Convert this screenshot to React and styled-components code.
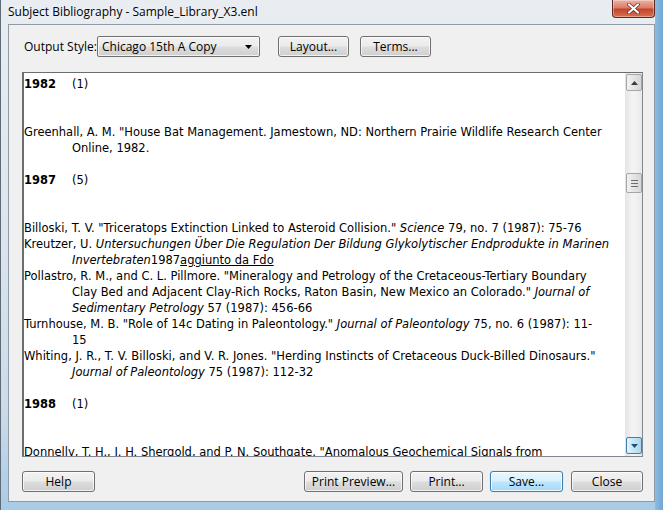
import React from "react";
import styled, { createGlobalStyle, css } from "styled-components";

const GlobalStyle = createGlobalStyle`
  html, body {
    margin: 0;
    padding: 0;
    overflow: hidden;
  }
  body {
    font-family: "Open Sans", "Noto Sans", sans-serif;
  }
`;

const Window = styled.div`
  width: 663px;
  height: 510px;
  box-sizing: border-box;
  display: flex;
  flex-direction: column;
  border-left: 1px solid #5d6b78;
  background:
    linear-gradient(to right, transparent 654px, #8cbde2 654px, #6fa6d3 662px),
    linear-gradient(to bottom, #e9edf1 0%, #dfe6ed 40%, #cddbe8 80%, #a9cbe6 100%);
`;

const TitleBar = styled.div`
  height: 24px;
  flex: none;
  display: flex;
  align-items: flex-start;
  padding-left: 7px;
`;

const Title = styled.div`
  font-size: 12px;
  line-height: 24px;
  color: #000;
  text-shadow: 0 0 6px rgba(255, 255, 255, 0.9);
`;

const CloseButton = styled.div`
  margin-left: auto;
  margin-right: 8px;
  width: 43px;
  height: 18px;
  box-sizing: border-box;
  border: 1px solid #5a2a22;
  border-top: none;
  border-radius: 0 0 4px 4px;
  background: linear-gradient(to bottom, #eeb2a4 0%, #dc7c68 45%, #c4442d 55%, #d8704f 100%);
  box-shadow: inset 0 0 0 1px rgba(255, 255, 255, 0.35);
  display: flex;
  align-items: center;
  justify-content: center;
`;

const Client = styled.div`
  flex: 1;
  margin: 0 8px 8px 7px;
  box-sizing: border-box;
  border: 1px solid #8e9aa6;
  background: #f0f0f0;
  display: flex;
  flex-direction: column;
  padding: 11px 11px 9px 13px;
`;

const Toolbar = styled.div`
  height: 21px;
  display: flex;
  align-items: center;
  padding-left: 2px;
`;

const Label = styled.span`
  font-size: 12px;
  color: #000;
  width: 73px;
  white-space: nowrap;
`;

const buttonFace = css`
  box-sizing: border-box;
  height: 21px;
  border: 1px solid #707070;
  border-radius: 3px;
  background: linear-gradient(to bottom, #f2f2f2 0%, #ebebeb 48%, #dddddd 52%, #cfcfcf 100%);
  box-shadow: inset 0 0 0 1px rgba(255, 255, 255, 0.7);
  font-family: "Open Sans", "Noto Sans", sans-serif;
  font-size: 12px;
  color: #000;
`;

const Select = styled.div`
  ${buttonFace}
  width: 163px;
  border-radius: 2px;
  display: flex;
  align-items: center;
  padding: 0 7px 0 4px;
  justify-content: space-between;
`;

const Button = styled.div`
  ${buttonFace}
  width: ${(p) => p.$w || 73}px;
  margin-left: ${(p) => p.$ml || 0}px;
  display: flex;
  align-items: center;
  justify-content: center;
  ${(p) =>
    p.$default &&
    css`
      border-color: #3c7fb1;
      background: linear-gradient(to bottom, #eaf6fd 0%, #d9f0fc 48%, #bee6fd 52%, #a7d9f5 100%);
      box-shadow: inset 0 0 0 1px rgba(255, 255, 255, 0.8), 0 0 1px #7fb8e0;
    `}
`;

const TextBox = styled.div`
  margin-top: 15px;
  height: 385px;
  box-sizing: border-box;
  border: 1px solid #828790;
  border-top-color: #6d6d6d;
  border-left: 2px solid #6d6d6d;
  background: #fff;
  display: flex;
  overflow: hidden;
`;

const Content = styled.div`
  flex: 1;
  padding: 3px 0 0 0;
  font-family: "DejaVu Sans", "Liberation Sans", sans-serif;
  font-size: 11.5px;
  line-height: 16px;
  color: #000;
  overflow: hidden;
  white-space: nowrap;
`;

const Line = styled.div`
  height: 16px;
  padding-left: ${(p) => (p.$cont ? 48 : 0)}px;
`;

const Heading = styled.div`
  height: 16px;
  display: flex;
`;

const Year = styled.b`
  width: 48px;
`;

const Blank = styled.div`
  height: ${(p) => p.$n * 16}px;
`;

const Scrollbar = styled.div`
  width: 17px;
  flex: none;
  display: flex;
  flex-direction: column;
  background: linear-gradient(to right, #e3e3e3, #f3f3f3 40%, #f3f3f3 60%, #e8e8e8);
  padding: 1px 0;
  box-sizing: border-box;
`;

const ScrollBtn = styled.div`
  width: 16px;
  height: 17px;
  margin-left: 1px;
  box-sizing: border-box;
  border: 1px solid #a5a5a5;
  border-radius: 2px;
  background: linear-gradient(to right, #f2f2f2, #e4e4e4 50%, #d6d6d6);
  display: flex;
  align-items: center;
  justify-content: center;
  margin-top: ${(p) => p.$mt || 0}px;
  ${(p) =>
    p.$hot &&
    css`
      border-color: #3c7fb1;
      background: linear-gradient(to right, #e5f4fc, #c4e5f6 50%, #a8d7f2);
    `}
`;

const Thumb = styled(ScrollBtn)`
  height: 20px;
`;

const ButtonRow = styled.div`
  margin-top: 14px;
  display: flex;
  align-items: center;
`;

const Arrow = ({ down, color = "#3b3b3b" }) => (
  <svg width="7" height="4" viewBox="0 0 7 4">
    <path d={down ? "M0 0 L7 0 L3.5 4 Z" : "M0 4 L7 4 L3.5 0 Z"} fill={color} />
  </svg>
);

const Grip = () => (
  <svg width="7" height="7" viewBox="0 0 7 7">
    <path d="M0 0.5H7M0 3.5H7M0 6.5H7" stroke="#6d6d6d" strokeWidth="1" />
  </svg>
);

const Seg = ({ s }) => {
  if (typeof s === "string") return s;
  if (s.i) return <i>{s.i}</i>;
  if (s.u) return <u>{s.u}</u>;
  return null;
};

const bib = [
  { year: "1982", count: "(1)", entries: [
    [
      ['Greenhall, A. M. "House Bat Management. Jamestown, ND: Northern Prairie Wildlife Research Center'],
      ["Online, 1982."],
    ],
  ] },
  { year: "1987", count: "(5)", entries: [
    [['Billoski, T. V. "Triceratops Extinction Linked to Asteroid Collision." ', { i: "Science" }, " 79, no. 7 (1987): 75-76"]],
    [
      ["Kreutzer, U. ", { i: "Untersuchungen Über Die Regulation Der Bildung Glykolytischer Endprodukte in Marinen" }],
      [{ i: "Invertebraten" }, "1987", { u: "aggiunto da Fdo" }],
    ],
    [
      ['Pollastro, R. M., and C. L. Pillmore. "Mineralogy and Petrology of the Cretaceous-Tertiary Boundary'],
      ['Clay Bed and Adjacent Clay-Rich Rocks, Raton Basin, New Mexico an Colorado." ', { i: "Journal of" }],
      [{ i: "Sedimentary Petrology" }, " 57 (1987): 456-66"],
    ],
    [
      ['Turnhouse, M. B. "Role of 14c Dating in Paleontology." ', { i: "Journal of Paleontology" }, " 75, no. 6 (1987): 11-"],
      ["15"],
    ],
    [
      ['Whiting, J. R., T. V. Billoski, and V. R. Jones. "Herding Instincts of Cretaceous Duck-Billed Dinosaurs."'],
      [{ i: "Journal of Paleontology" }, " 75 (1987): 112-32"],
    ],
  ] },
  { year: "1988", count: "(1)", entries: [
    [['Donnelly, T. H., J. H. Shergold, and P. N. Southgate. "Anomalous Geochemical Signals from']],
  ] },
];

export default function App() {
  return (
    <>
      <GlobalStyle />
      <Window>
        <TitleBar>
          <Title>Subject Bibliography - Sample_Library_X3.enl</Title>
          <CloseButton>
            <svg width="13" height="11" viewBox="0 0 13 11">
              <path d="M2 1.5 L11 9.5 M11 1.5 L2 9.5" stroke="#6b2416" strokeWidth="3.6" strokeLinecap="round" />
              <path d="M2 1.5 L11 9.5 M11 1.5 L2 9.5" stroke="#ffffff" strokeWidth="2.2" strokeLinecap="round" />
            </svg>
          </CloseButton>
        </TitleBar>
        <Client>
          <Toolbar>
            <Label>Output Style:</Label>
            <Select>
              <span>Chicago 15th A Copy</span>
              <Arrow down color="#000" />
            </Select>
            <Button $w={71} $ml={18}>Layout...</Button>
            <Button $w={71} $ml={11}>Terms...</Button>
          </Toolbar>
          <TextBox>
            <Content>
              {bib.map((g, gi) => (
                <React.Fragment key={g.year}>
                  {gi > 0 && <Blank $n={1} />}
                  <Heading>
                    <Year>{g.year}</Year>
                    <span>{g.count}</span>
                  </Heading>
                  <Blank $n={2} />
                  {g.entries.map((entry, ei) =>
                    entry.map((line, li) => (
                      <Line key={`${ei}-${li}`} $cont={li > 0}>
                        {line.map((s, si) => (
                          <Seg key={si} s={s} />
                        ))}
                      </Line>
                    ))
                  )}
                </React.Fragment>
              ))}
            </Content>
            <Scrollbar>
              <ScrollBtn><Arrow /></ScrollBtn>
              <Thumb $mt={82}><Grip /></Thumb>
              <ScrollBtn $mt={244} $hot><Arrow down color="#1f4e79" /></ScrollBtn>
            </Scrollbar>
          </TextBox>
          <ButtonRow>
            <Button>Help</Button>
            <Button $w={99} $ml={209}>Print Preview...</Button>
            <Button $ml={7}>Print...</Button>
            <Button $ml={7} $default>Save...</Button>
            <Button $w={72} $ml={8}>Close</Button>
          </ButtonRow>
        </Client>
      </Window>
    </>
  );
}
